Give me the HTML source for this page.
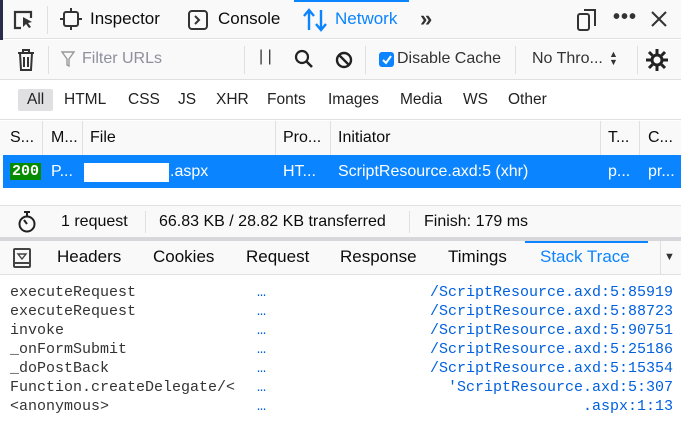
<!DOCTYPE html>
<html><head><meta charset="utf-8"><style>
*{box-sizing:border-box;margin:0;padding:0}
body{width:681px;height:423px;overflow:hidden;background:#fff;font-family:"Liberation Sans",sans-serif;font-size:17px;color:#0c0c0d;position:relative}
.a{position:absolute;white-space:nowrap}
.bar{position:absolute;left:0;width:681px}
.mono{font-family:"Liberation Mono",monospace;font-size:15px}
.blue{color:#0060df}
.sep{position:absolute;width:1px;background:#e0e0e2}
</style></head><body>
<div class="bar" style="top:0;height:39px;background:#f9f9fa;border-bottom:1px solid #e0e0e2"></div>
<div class="a" style="left:0;top:0;width:3px;height:46px;background:#2a2a4a"></div>
<div class="a" style="left:294px;top:0;width:115px;height:2px;background:#0a84ff"></div>
<svg class="a" style="left:12px;top:9px" width="24" height="22" viewBox="0 0 24 22"><path d="M9 19H3V3h16v6" fill="none" stroke="#333" stroke-width="2.2"/><path d="M11 8l9 5-4 1 3 4-2 1-3-4-3 3z" fill="#333"/></svg>
<div class="sep" style="left:47px;top:6px;height:28px"></div>
<svg class="a" style="left:60px;top:8px" width="22" height="22" viewBox="0 0 22 22"><rect x="4" y="4" width="14" height="14" rx="2" fill="none" stroke="#333" stroke-width="2"/><path d="M11 0v4M11 18v4M0 11h4M18 11h4" stroke="#333" stroke-width="2"/></svg>
<div class="a" style="left:90px;top:9px">Inspector</div>
<svg class="a" style="left:187px;top:9px" width="22" height="22" viewBox="0 0 22 22"><rect x="2" y="2" width="18" height="18" rx="3" fill="none" stroke="#333" stroke-width="2"/><path d="M8 7l4 4-4 4" fill="none" stroke="#333" stroke-width="2"/></svg>
<div class="a" style="left:218px;top:9px">Console</div>
<svg class="a" style="left:303px;top:8px" width="24" height="24" viewBox="0 0 24 24"><path d="M6 22V3M1 8l5-6 5 6M18 2v19M13 16l5 6 5-6" fill="none" stroke="#0a84ff" stroke-width="2.4"/></svg>
<div class="a" style="left:335px;top:9px;color:#0a84ff">Network</div>
<div class="a" style="left:420px;top:6px;font-size:22px;font-weight:bold;color:#333">»</div>
<svg class="a" style="left:575px;top:8px" width="24" height="24" viewBox="0 0 24 24"><rect x="3" y="6" width="11" height="16" rx="2" fill="none" stroke="#333" stroke-width="2"/><path d="M9 2h11v16" fill="none" stroke="#333" stroke-width="2"/></svg>
<div class="a" style="left:613px;top:6px;font-size:20px;font-weight:bold;letter-spacing:1px;color:#333">•••</div>
<svg class="a" style="left:650px;top:10px" width="18" height="18" viewBox="0 0 18 18"><path d="M2 2l14 14M16 2L2 16" stroke="#333" stroke-width="2"/></svg>
<div class="bar" style="top:40px;height:40px;background:#f9f9fa;border-bottom:1px solid #e0e0e2"></div>
<svg class="a" style="left:16px;top:49px" width="20" height="22" viewBox="0 0 20 22"><path d="M2 4h16M7 4V1h6v3M4 4l1 17h10l1-17M8 8v10M12 8v10" fill="none" stroke="#333" stroke-width="2"/></svg>
<div class="sep" style="left:48px;top:46px;height:28px"></div>
<svg class="a" style="left:61px;top:51px" width="14" height="16" viewBox="0 0 14 16"><path d="M1 1h12L8 8v7L6 14V8z" fill="none" stroke="#999" stroke-width="1.4"/></svg>
<div class="a" style="left:82px;top:50px;color:#8f8f9d;font-size:16px">Filter URLs</div>
<div class="sep" style="left:244px;top:46px;height:28px"></div>
<div class="a" style="left:259px;top:48px;font-size:16px;color:#333">| |</div>
<svg class="a" style="left:294px;top:49px" width="20" height="20" viewBox="0 0 20 20"><circle cx="8" cy="8" r="6" fill="none" stroke="#222" stroke-width="2.2"/><path d="M12 12l6 6" stroke="#222" stroke-width="2.6"/></svg>
<svg class="a" style="left:335px;top:51px" width="18" height="18" viewBox="0 0 18 18"><circle cx="9" cy="9" r="7" fill="none" stroke="#222" stroke-width="2.4"/><path d="M4 4l10 10" stroke="#222" stroke-width="2.4"/></svg>
<div class="sep" style="left:365px;top:46px;height:28px"></div>
<div class="a" style="left:379px;top:52px;width:15px;height:15px;background:#0a84ff;border-radius:3px"></div>
<svg class="a" style="left:380px;top:53px" width="13" height="13" viewBox="0 0 13 13"><path d="M3 7l3 3 5-7" fill="none" stroke="#fff" stroke-width="2"/></svg>
<div class="a" style="left:397px;top:50px;font-size:16px;color:#333">Disable Cache</div>
<div class="sep" style="left:515px;top:46px;height:28px"></div>
<div class="a" style="left:532px;top:50px;font-size:16px;color:#333">No Thro...</div>
<div class="a" style="left:609px;top:50px;font-size:9px;line-height:8px;color:#333">▲<br>▼</div>
<div class="sep" style="left:637px;top:46px;height:28px"></div>
<svg class="a" style="left:645px;top:48px" width="24" height="24" viewBox="0 0 24 24"><circle cx="12" cy="12" r="5" fill="none" stroke="#222" stroke-width="3"/><path d="M12 1v5M12 18v5M1 12h5M18 12h5M4 4l3.5 3.5M16.5 16.5L20 20M4 20l3.5-3.5M16.5 7.5L20 4" stroke="#222" stroke-width="3"/></svg>
<div class="bar" style="top:81px;height:39px;background:#fff;border-bottom:1px solid #e0e0e2"></div>
<div class="a" style="left:18px;top:89px;width:35px;height:22px;background:#e0e0e2;border-radius:2px"></div>
<div class="a" style="top:91px;left:27px;font-size:15.5px;color:#222">All</div>
<div class="a" style="top:91px;left:64px;font-size:15.5px;color:#222">HTML</div>
<div class="a" style="top:91px;left:128px;font-size:15.5px;color:#222">CSS</div>
<div class="a" style="top:91px;left:178px;font-size:15.5px;color:#222">JS</div>
<div class="a" style="top:91px;left:216px;font-size:15.5px;color:#222">XHR</div>
<div class="a" style="top:91px;left:267px;font-size:15.5px;color:#222">Fonts</div>
<div class="a" style="top:91px;left:328px;font-size:15.5px;color:#222">Images</div>
<div class="a" style="top:91px;left:400px;font-size:15.5px;color:#222">Media</div>
<div class="a" style="top:91px;left:463px;font-size:15.5px;color:#222">WS</div>
<div class="a" style="top:91px;left:508px;font-size:15.5px;color:#222">Other</div>
<div class="bar" style="top:121px;height:34px;background:#f9f9fa"></div>
<div class="sep" style="left:42px;top:121px;height:34px"></div>
<div class="sep" style="left:82px;top:121px;height:34px"></div>
<div class="sep" style="left:275px;top:121px;height:34px"></div>
<div class="sep" style="left:330px;top:121px;height:34px"></div>
<div class="sep" style="left:600px;top:121px;height:34px"></div>
<div class="sep" style="left:639px;top:121px;height:34px"></div>
<div class="a" style="top:129px;left:10px;font-size:16px">S...</div>
<div class="a" style="top:129px;left:51px;font-size:16px">M...</div>
<div class="a" style="top:129px;left:90px;font-size:16px">File</div>
<div class="a" style="top:129px;left:283px;font-size:16px">Pro...</div>
<div class="a" style="top:129px;left:338px;font-size:16px">Initiator</div>
<div class="a" style="top:129px;left:608px;font-size:16px">T...</div>
<div class="a" style="top:129px;left:648px;font-size:16px">C...</div>
<div class="bar" style="top:155px;height:33px;background:#0a84ff;left:3px;width:678px"></div>
<div class="a mono" style="top:163px;left:10px;background:#058b00;color:#fff;padding:0 2px;line-height:17px;font-weight:bold">200</div>
<div class="a" style="top:163px;left:51px;font-size:16px;color:#fff">P...</div>
<div class="a" style="top:163px;left:84px;width:85px;height:19px;background:#fff"></div>
<div class="a" style="top:163px;left:170px;font-size:16px;color:#fff">.aspx</div>
<div class="a" style="top:163px;left:283px;font-size:16px;color:#fff">HT...</div>
<div class="a" style="top:163px;left:338px;font-size:16px;color:#fff">ScriptResource.axd:5 (xhr)</div>
<div class="a" style="top:163px;left:608px;font-size:16px;color:#fff">p...</div>
<div class="a" style="top:163px;left:648px;font-size:16px;color:#fff">pr...</div>
<div class="bar" style="top:205px;height:33px;background:#f9f9fa;border-top:1px solid #e0e0e2"></div>
<svg class="a" style="left:17px;top:210px" width="20" height="24" viewBox="0 0 20 24"><circle cx="10" cy="14" r="7.5" fill="none" stroke="#222" stroke-width="2"/><path d="M7 2h6M10 2v4M10 14l-3-4" stroke="#222" stroke-width="2"/></svg>
<div class="a" style="top:213px;left:61px;font-size:16px">1 request</div>
<div class="sep" style="left:145px;top:211px;height:22px"></div>
<div class="a" style="top:213px;left:159px;font-size:16px">66.83 KB / 28.82 KB transferred</div>
<div class="sep" style="left:409px;top:211px;height:22px"></div>
<div class="a" style="top:213px;left:424px;font-size:16px">Finish: 179 ms</div>
<div class="bar" style="top:237px;height:4px;background:#d7d7db"></div>
<div class="bar" style="top:241px;height:34px;background:#f9f9fa;border-bottom:1px solid #e0e0e2"></div>
<div class="a" style="left:525px;top:241px;width:123px;height:2px;background:#0a84ff"></div>
<svg class="a" style="left:12px;top:247px" width="20" height="22" viewBox="0 0 20 22"><rect x="2" y="2" width="16" height="18" rx="1" fill="none" stroke="#444" stroke-width="2"/><path d="M6 7h8l-4 5z" fill="none" stroke="#444" stroke-width="1.4"/><path d="M2 16h16" stroke="#444" stroke-width="2"/></svg>
<div class="a" style="top:247px;left:57px">Headers</div>
<div class="a" style="top:247px;left:153px">Cookies</div>
<div class="a" style="top:247px;left:246px">Request</div>
<div class="a" style="top:247px;left:340px">Response</div>
<div class="a" style="top:247px;left:448px">Timings</div>
<div class="a" style="top:247px;left:540px;color:#0a84ff">Stack Trace</div>
<div class="sep" style="left:660px;top:241px;height:34px"></div>
<div class="a" style="top:251px;left:664px;font-size:11px;color:#333">▼</div>
<div class="a mono" style="left:10px;top:283px;line-height:19px;color:#333">executeRequest<br>executeRequest<br>invoke<br>_onFormSubmit<br>_doPostBack<br>Function.createDelegate/&lt;<br>&lt;anonymous&gt;</div>
<div class="a mono blue" style="left:257px;top:283px;line-height:19px">…<br>…<br>…<br>…<br>…<br>…<br>…</div>
<div class="a mono blue" style="right:8px;top:283px;line-height:19px;text-align:right">/ScriptResource.axd:5:85919<br>/ScriptResource.axd:5:88723<br>/ScriptResource.axd:5:90751<br>/ScriptResource.axd:5:25186<br>/ScriptResource.axd:5:15354<br>'ScriptResource.axd:5:307<br>.aspx:1:13</div>
</body></html>
